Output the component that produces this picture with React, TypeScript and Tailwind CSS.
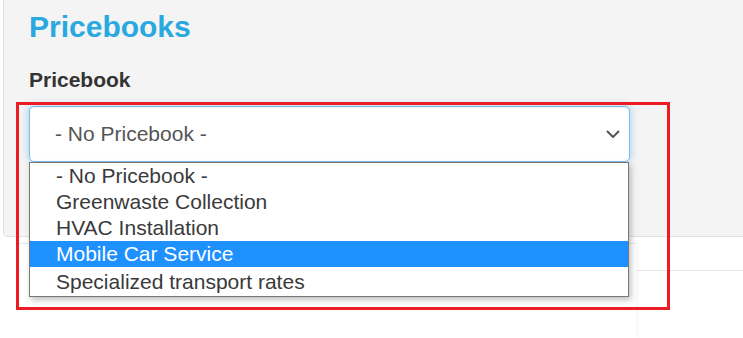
import React from "react";

const options = [
  "- No Pricebook -",
  "Greenwaste Collection",
  "HVAC Installation",
  "Mobile Car Service",
  "Specialized transport rates",
];

export default function App() {
  return (
    <div className="relative w-[743px] h-[338px] overflow-hidden bg-white font-['Liberation_Sans',Arial,sans-serif]">
      <div className="ml-[3px] h-[237px] bg-[#f4f4f4] border-l border-b border-[#e0e0e0] rounded-bl-[5px] pl-[25px] pt-[9px]">
        <h1 className="text-[30px] leading-[36px] font-bold text-[#29a9e0]">Pricebooks</h1>
        <div className="mt-[23px] text-[21px] leading-[24px] font-bold text-[#333]">Pricebook</div>
        <div className="relative mt-[14px] w-[601px]">
          <div className="h-[56px] flex items-center justify-between rounded-[5px] border border-[#80bbe8] bg-white pl-[25px] pr-[9px] text-[21px] text-[#555] shadow-[inset_0_1px_1px_rgba(0,0,0,0.075),0_0_8px_rgba(102,175,233,0.6)]">
            <span>- No Pricebook -</span>
            <svg width="14" height="8" viewBox="0 0 14 8" className="block">
              <path d="M1 1l6 6 6-6" stroke="#555" strokeWidth="2" fill="none" />
            </svg>
          </div>
          <ul className="absolute left-0 top-[56px] z-10 w-[600px] border border-[#777] bg-white pb-[1px] text-[21px] text-[#3a3a3a] shadow-[2px_3px_6px_rgba(0,0,0,0.25)]">
            {options.map((o, i) => (
              <li
                key={o}
                className={
                  i === 3
                    ? "h-[26px] leading-[26px] pl-[26px] bg-[#1e90ff] text-white"
                    : i === 4
                    ? "h-[28px] pt-[2px] leading-[26px] pl-[26px]"
                    : "h-[26px] leading-[26px] pl-[26px]"
                }
              >
                {o}
              </li>
            ))}
          </ul>
        </div>
      </div>
      <div className="flex">
        <div className="ml-[18px] mt-[6px] w-[618px] h-[95px] border-t border-[#e9e9e9] bg-white shadow-[2px_0_4px_rgba(0,0,0,0.03)]" />
        <div className="flex-1 h-[34px] border-b border-[#e6e6e6]" />
      </div>
      <div className="pointer-events-none absolute left-[16px] top-[102px] z-20 w-[654px] h-[208px] border-[3px] border-[#ec1c24]" />
    </div>
  );
}
